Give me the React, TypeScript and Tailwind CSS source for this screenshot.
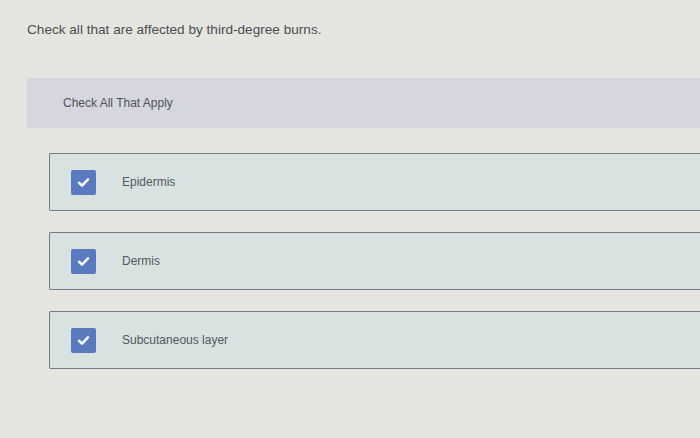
const options = ["Epidermis", "Dermis", "Subcutaneous layer"];

const CheckBox = () => (
  <span className="flex h-[25px] w-[25px] shrink-0 items-center justify-center rounded-[2px] bg-[#5a7ac0]">
    <svg width="13" height="11" viewBox="0 0 13 11" fill="none">
      <path d="M2 5.8 L5 8.6 L11 2.4" stroke="#f4f6fb" strokeWidth="2.6" strokeLinecap="round" strokeLinejoin="round" />
    </svg>
  </span>
);

export default function App() {
  return (
    <div className="h-[438px] w-[700px] overflow-hidden bg-[#e5e5df] font-['Liberation_Sans',Arial,sans-serif]">
      <p className="pl-[27px] pt-[21px] text-[13.6px] leading-[18px] text-[#4b4d52]">
        Check all that are affected by third-degree burns.
      </p>
      <div className="ml-[27px] mt-[39px] flex h-[50px] items-center bg-[#d5d6de] pl-[36px]">
        <span className="text-[12px] text-[#50535a]">Check All That Apply</span>
      </div>
      <div className="ml-[49px] mt-[25px] flex flex-col gap-[21px]">
        {options.map((label) => (
          <div
            key={label}
            className="flex h-[58px] items-center rounded-l-[2px] border border-r-0 border-[#737c87] bg-[#d8e2e0] pl-[21px]"
          >
            <CheckBox />
            <span className="ml-[26px] text-[12px] text-[#55585e]">{label}</span>
          </div>
        ))}
      </div>
    </div>
  );
}
